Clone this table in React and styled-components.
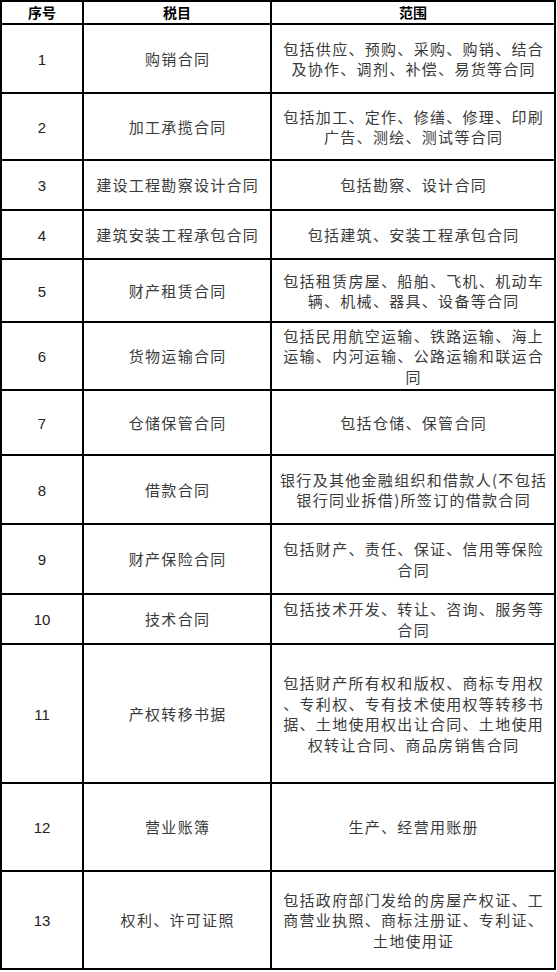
import React from "react";
import styled, { createGlobalStyle } from "styled-components";

const Global = createGlobalStyle`
  html, body { margin: 0; padding: 0; background: #fff; }
  body { font-family: "Noto Sans CJK SC", "Noto Sans", sans-serif; }
`;

const Table = styled.div`
  width: 556px;
  border-top: 2px solid #000;
  border-left: 2px solid #000;
  box-sizing: border-box;
`;

const Row = styled.div`
  display: grid;
  grid-template-columns: 82px 188px 284px;
  height: ${(p) => p.$h}px;
  box-sizing: border-box;
`;

const Cell = styled.div`
  display: flex;
  flex-direction: column;
  align-items: center;
  justify-content: center;
  border-right: 2px solid #000;
  border-bottom: 2px solid #000;
  box-sizing: border-box;
  text-align: center;
  overflow: hidden;
  padding-top: ${(p) => (p.$head ? 0 : 1)}px;
`;

const HeadText = styled.span`
  font-family: "Liberation Sans", "Noto Sans CJK SC", sans-serif;
  font-weight: bold;
  font-size: 14px;
  color: #000;
  line-height: 20px;
`;

const Num = styled.span`
  font-family: "Liberation Sans", Arial, sans-serif;
  font-size: 15px;
  color: #222;
`;

const Line = styled.span`
  display: block;
  white-space: nowrap;
  font-family: "Noto Sans CJK SC", sans-serif;
  font-size: 15px;
  letter-spacing: 1.3px;
  line-height: 20.5px;
  color: #3a3a3a;
  margin-right: -1.3px;
`;

const rows = [
  { h: 69, n: "1", name: "购销合同", scope: ["包括供应、预购、采购、购销、结合", "及协作、调剂、补偿、易货等合同"] },
  { h: 67, n: "2", name: "加工承揽合同", scope: ["包括加工、定作、修缮、修理、印刷", "广告、测绘、测试等合同"] },
  { h: 50, n: "3", name: "建设工程勘察设计合同", scope: ["包括勘察、设计合同"] },
  { h: 49, n: "4", name: "建筑安装工程承包合同", scope: ["包括建筑、安装工程承包合同"] },
  { h: 63, n: "5", name: "财产租赁合同", scope: ["包括租赁房屋、船舶、飞机、机动车", "辆、机械、器具、设备等合同"] },
  { h: 68, n: "6", name: "货物运输合同", scope: ["包括民用航空运输、铁路运输、海上", "运输、内河运输、公路运输和联运合", "同"] },
  { h: 65, n: "7", name: "仓储保管合同", scope: ["包括仓储、保管合同"] },
  { h: 69, n: "8", name: "借款合同", scope: ["银行及其他金融组织和借款人(不包括", "银行同业拆借)所签订的借款合同"] },
  { h: 70, n: "9", name: "财产保险合同", scope: ["包括财产、责任、保证、信用等保险", "合同"] },
  { h: 50, n: "10", name: "技术合同", scope: ["包括技术开发、转让、咨询、服务等", "合同"] },
  { h: 139, n: "11", name: "产权转移书据", scope: ["包括财产所有权和版权、商标专用权", "、专利权、专有技术使用权等转移书", "据、土地使用权出让合同、土地使用", "权转让合同、商品房销售合同"] },
  { h: 88, n: "12", name: "营业账簿", scope: ["生产、经营用账册"] },
  { h: 98, n: "13", name: "权利、许可证照", scope: ["包括政府部门发给的房屋产权证、工", "商营业执照、商标注册证、专利证、", "土地使用证"] },
];

export default function App() {
  return (
    <>
      <Global />
      <Table>
        <Row $h={23}>
          <Cell $head><HeadText>序号</HeadText></Cell>
          <Cell $head><HeadText>税目</HeadText></Cell>
          <Cell $head><HeadText>范围</HeadText></Cell>
        </Row>
        {rows.map((r) => (
          <Row key={r.n} $h={r.h}>
            <Cell><Num>{r.n}</Num></Cell>
            <Cell><Line>{r.name}</Line></Cell>
            <Cell>
              {r.scope.map((s, i) => (
                <Line key={i}>{s}</Line>
              ))}
            </Cell>
          </Row>
        ))}
      </Table>
    </>
  );
}
